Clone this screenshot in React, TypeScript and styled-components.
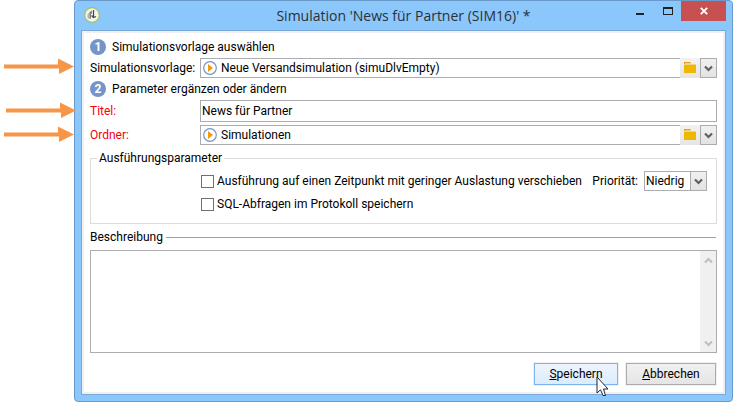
import React, { useState } from "react";
import styled, { createGlobalStyle } from "styled-components";

const line = "#ababb0";

const GlobalStyle = createGlobalStyle`
  *, *::before, *::after { box-sizing: border-box; }
  body {
    margin: 0;
    background: #fff;
    color: #000;
    font: 12px/16px Roboto, "Liberation Sans", sans-serif;
  }
  button, input, select, textarea { font: inherit; color: inherit; margin: 0; }
  svg { display: block; }
`;

const Page = styled.main`
  display: flex;
  align-items: flex-start;
  padding-right: 14px;
`;

const Gutter = styled.aside`
  display: flex;
  flex: none;
  flex-direction: column;
  gap: 8px;
  width: 74px;
  padding-top: 58px;
  z-index: 1;
`;

const Arrow = styled.svg<{ $first?: boolean; $indent?: boolean }>`
  flex: none;
  width: 70px;
  height: 16px;
  margin-left: ${(p) => (p.$indent ? 6 : 4)}px;
  margin-bottom: ${(p) => (p.$first ? 20 : 0)}px;
`;

const Window = styled.section`
  flex: 1;
  min-width: 0;
  padding: 0 6px 6px;
  background: #8cc7fb;
  border: 1px solid #6a9aca;
  border-radius: 4px;
`;

const TitleBar = styled.header`
  display: grid;
  grid-template-columns: 98px 1fr 98px;
  height: 29px;
`;

const AppIcon = styled.svg`
  width: 16px;
  height: 16px;
  margin: 6px 0 0 3px;
`;

const WindowTitle = styled.h1`
  margin: 0;
  padding-top: 5px;
  text-align: center;
  white-space: nowrap;
  color: #2b3038;
  font: 14px/20px "Open Sans", sans-serif;
`;

const WindowButtons = styled.div`
  display: flex;
  justify-content: flex-end;
  height: 20px;
`;

const WindowButton = styled.button<{ $close?: boolean }>`
  display: grid;
  place-items: center;
  width: ${(p) => (p.$close ? 45 : 27)}px;
  padding: 0;
  border: 0;
  background: ${(p) => (p.$close ? "#c75050" : "transparent")};
`;

const Client = styled.form`
  display: flex;
  flex-direction: column;
  padding: 8px 8px 9px;
  background: #fff;
  border: 1px solid #78a9d8;
  box-shadow: inset 0 0 0 2px #f0f0f0;
`;

const Steps = styled.div`
  display: flex;
  flex-direction: column;
  gap: 3px;
`;

const StepHeading = styled.h2`
  display: flex;
  align-items: center;
  gap: 6px;
  margin: 0;
  font: inherit;
`;

const StepNumber = styled.span`
  width: 16px;
  height: 16px;
  border-radius: 50%;
  background: #7395c8;
  color: #fff;
  text-align: center;
  font-weight: 700;
`;

const FieldRow = styled.div`
  display: grid;
  grid-template-columns: 110px 1fr;
  align-items: center;
`;

const FieldLabel = styled.label<{ $required?: boolean }>`
  color: ${(p) => (p.$required ? "#f8000e" : "#000")};
  white-space: nowrap;
`;

const TextInput = styled.input`
  width: 100%;
  height: 22px;
  padding: 0 1px;
  border: 1px solid ${line};
  border-radius: 0;
  background: #fff;
  outline: 0;
`;

const Combo = styled.div`
  display: flex;
  height: 20px;
`;

const ComboField = styled.div`
  display: flex;
  flex: 1;
  align-items: center;
  gap: 4px;
  min-width: 0;
  padding-left: 2px;
  border: 1px solid ${line};
  border-right: 0;
`;

const ComboInput = styled.input`
  flex: 1;
  min-width: 0;
  height: 16px;
  padding: 0;
  border: 0;
  outline: 0;
  background: transparent;
`;

const FolderButton = styled.button`
  display: grid;
  place-items: center;
  width: 20px;
  padding: 0;
  border: 0;
  background: linear-gradient(#f2f2f2, #e5e5e5);
`;

const DropButton = styled.button`
  display: grid;
  place-items: center;
  width: 17px;
  padding: 0;
  border: 1px solid ${line};
  background: linear-gradient(#f0f0f0, #e3e3e3);
`;

const Group = styled.fieldset`
  display: grid;
  grid-template-columns: 1fr auto;
  min-width: 0;
  margin: 5px 0 0;
  padding: 5px 9px 11px 110px;
  border: 1px solid #dcdcdc;
`;

const Legend = styled.legend`
  margin-left: -104px;
  padding: 0 2px;
`;

const Checks = styled.div`
  display: flex;
  flex-direction: column;
  gap: 7px;
  padding-top: 2px;
`;

const CheckLabel = styled.label`
  display: flex;
  align-items: center;
  gap: 3px;
  white-space: nowrap;
`;

const CheckBox = styled.input`
  appearance: none;
  width: 13px;
  height: 13px;
  border: 1px solid #707070;
  background: #fff;
  &:checked { background: #707070; box-shadow: inset 0 0 0 2px #fff; }
`;

const Priority = styled.div`
  display: flex;
  align-items: center;
  align-self: start;
  gap: 6px;
`;

const SelectBox = styled.div`
  display: grid;
  grid-template-columns: 1fr 17px;
  width: 63px;
  height: 20px;
`;

const Select = styled.select`
  grid-area: 1 / 1 / 2 / 3;
  appearance: none;
  padding: 0 18px 0 1px;
  border: 1px solid ${line};
  border-radius: 0;
  background: #fff;
`;

const SelectArrow = styled.span`
  grid-area: 1 / 2;
  display: grid;
  place-items: center;
  border: 1px solid ${line};
  background: linear-gradient(#f0f0f0, #e3e3e3);
  pointer-events: none;
  z-index: 1;
`;

const SectionLabel = styled.label`
  display: flex;
  align-items: center;
  gap: 3px;
  margin: 5px 1px 5px 0;
  &::after { content: ""; flex: 1; height: 1px; background: #a0a0a3; }
`;

const MemoBox = styled.div`
  display: flex;
  height: 103px;
  border: 1px solid ${line};
`;

const Memo = styled.textarea`
  flex: 1;
  min-width: 0;
  padding: 2px;
  border: 0;
  outline: 0;
  resize: none;
  background: transparent;
`;

const ScrollTrack = styled.div`
  display: flex;
  flex-direction: column;
  justify-content: space-between;
  width: 16px;
  background: #f0f0f0;
`;

const ScrollButton = styled.button`
  display: grid;
  place-items: center;
  height: 18px;
  padding: 0;
  border: 0;
  background: transparent;
`;

const Actions = styled.footer`
  display: flex;
  justify-content: flex-end;
  gap: 8px;
  margin: 10px 1px 0 0;
`;

const ActionButton = styled.button<{ $hot?: boolean }>`
  position: relative;
  width: ${(p) => (p.$hot ? 84 : 90)}px;
  height: 22px;
  padding: 0;
  border: 1px solid ${(p) => (p.$hot ? "#7eb4ea" : "#acacac")};
  background: ${(p) => (p.$hot ? "linear-gradient(#ecf4fc, #dcecfc)" : "linear-gradient(#f0f0f0, #e5e5e5)")};
  box-shadow: 0 0 0 1px #f0f0f0;
`;

const Pointer = styled.svg`
  position: absolute;
  top: 12px;
  left: 61px;
  width: 13px;
  height: 21px;
`;

const PointingArrow = ({ first, indent }: { first?: boolean; indent?: boolean }) => (
  <Arrow $first={first} $indent={indent} viewBox="0 0 70 16" aria-hidden="true">
    <path d="M0 6.500H54V.5L70 8.500 55 16V10.500H0z" fill="#f79646" />
  </Arrow>
);

const Chevron = ({ up, faint }: { up?: boolean; faint?: boolean }) => (
  <svg width="9" height="7" viewBox="0 0 9 7" aria-hidden="true">
    <path
      d={up ? "M1 5.500 4.500 2 8 5.500" : "M1 1.500 4.500 5 8 1.500"}
      fill="none"
      stroke={faint ? "#bfbfbf" : "#606060"}
      strokeWidth="2.200"
    />
  </svg>
);

const PlayIcon = () => (
  <svg width="14" height="14" viewBox="0 0 14 14" aria-hidden="true">
    <circle cx="7" cy="7" r="6.300" fill="#fff" stroke="#7395c8" strokeWidth="1.200" />
    <path d="M5 3 10 7 5 11z" fill="#f39a0b" />
  </svg>
);

const FolderIcon = () => (
  <svg width="12" height="12" viewBox="0 0 12 12" aria-hidden="true">
    <path d="M0 0H6L7 1V3H0z" fill="#ef9a1a" />
    <path d="M1 1H7V2H12V3H0V2H1z" fill="#f3d280" />
    <path d="M0 3H12V11H0z" fill="#efb700" />
  </svg>
);

function ComboBox({ id, initial }: { id: string; initial: string }) {
  const [value, setValue] = useState(initial);
  return (
    <Combo>
      <ComboField>
        <PlayIcon />
        <ComboInput id={id} value={value} onChange={(e) => setValue(e.target.value)} />
      </ComboField>
      <FolderButton type="button" aria-label="Ordner öffnen"><FolderIcon /></FolderButton>
      <DropButton type="button" aria-label="Liste öffnen"><Chevron /></DropButton>
    </Combo>
  );
}

export default function App() {
  return (
    <>
      <GlobalStyle />
      <Page>
        <Gutter>
          <PointingArrow first />
          <PointingArrow indent />
          <PointingArrow />
        </Gutter>
        <Window>
          <TitleBar>
            <AppIcon viewBox="0 0 16 16" aria-hidden="true">
              <circle cx="8" cy="8" r="7.300" fill="#f4f5f1" stroke="#9cc45a" strokeWidth="1.200" />
              <path d="M3.500 7 5.500 5.500V12L3.500 11z" fill="#b5b5b0" />
              <path d="M5.500 5 8 3.500V6.500L7 7V11.500L5.500 12z" fill="#85857f" />
              <path d="M9.500 3V10.500M7.500 8.500 9.500 10.500 12 9.500" fill="none" stroke="#444" strokeWidth="1.200" />
            </AppIcon>
            <WindowTitle>Simulation 'News für Partner (SIM16)' *</WindowTitle>
            <WindowButtons>
              <WindowButton type="button" aria-label="Minimieren">
                <svg width="10" height="10" viewBox="0 0 10 10"><path d="M0 7H8V9H0z" fill="#222" /></svg>
              </WindowButton>
              <WindowButton type="button" aria-label="Maximieren">
                <svg width="10" height="8" viewBox="0 0 10 8"><path fillRule="evenodd" d="M0 0H10V8H0zM1 2V7H9V2z" fill="#222" /></svg>
              </WindowButton>
              <WindowButton type="button" aria-label="Schließen" $close>
                <svg width="8" height="8" viewBox="0 0 8 8"><path d="M.8.8 7.200 7.200M7.200.8.8 7.200" stroke="#fff" strokeWidth="1.900" /></svg>
              </WindowButton>
            </WindowButtons>
          </TitleBar>
          <Client onSubmit={(e) => e.preventDefault()}>
            <Steps>
              <StepHeading><StepNumber>1</StepNumber>Simulationsvorlage auswählen</StepHeading>
              <FieldRow>
                <FieldLabel htmlFor="template">Simulationsvorlage:</FieldLabel>
                <ComboBox id="template" initial="Neue Versandsimulation (simuDlvEmpty)" />
              </FieldRow>
              <StepHeading><StepNumber>2</StepNumber>Parameter ergänzen oder ändern</StepHeading>
              <FieldRow>
                <FieldLabel htmlFor="title" $required>Titel:</FieldLabel>
                <TextInput id="title" defaultValue="News für Partner" />
              </FieldRow>
              <FieldRow>
                <FieldLabel htmlFor="folder" $required>Ordner:</FieldLabel>
                <ComboBox id="folder" initial="Simulationen" />
              </FieldRow>
            </Steps>
            <Group>
              <Legend>Ausführungsparameter</Legend>
              <Checks>
                <CheckLabel>
                  <CheckBox type="checkbox" />
                  Ausführung auf einen Zeitpunkt mit geringer Auslastung verschieben
                </CheckLabel>
                <CheckLabel>
                  <CheckBox type="checkbox" />
                  SQL-Abfragen im Protokoll speichern
                </CheckLabel>
              </Checks>
              <Priority>
                <label htmlFor="priority">Priorität:</label>
                <SelectBox>
                  <Select id="priority" defaultValue="Niedrig">
                    <option>Niedrig</option>
                  </Select>
                  <SelectArrow><Chevron /></SelectArrow>
                </SelectBox>
              </Priority>
            </Group>
            <SectionLabel htmlFor="description">Beschreibung</SectionLabel>
            <MemoBox>
              <Memo id="description" />
              <ScrollTrack>
                <ScrollButton type="button" aria-label="Nach oben"><Chevron up faint /></ScrollButton>
                <ScrollButton type="button" aria-label="Nach unten"><Chevron faint /></ScrollButton>
              </ScrollTrack>
            </MemoBox>
            <Actions>
              <ActionButton type="submit" $hot>
                <u>S</u>peichern
                <Pointer viewBox="0 0 13 21" aria-hidden="true">
                  <path d="M1 1V17L4.500 13.800 7 19.500H9.500L7.500 13H12z" fill="#fff" stroke="#223" />
                </Pointer>
              </ActionButton>
              <ActionButton type="button"><u>A</u>bbrechen</ActionButton>
            </Actions>
          </Client>
        </Window>
      </Page>
    </>
  );
}
